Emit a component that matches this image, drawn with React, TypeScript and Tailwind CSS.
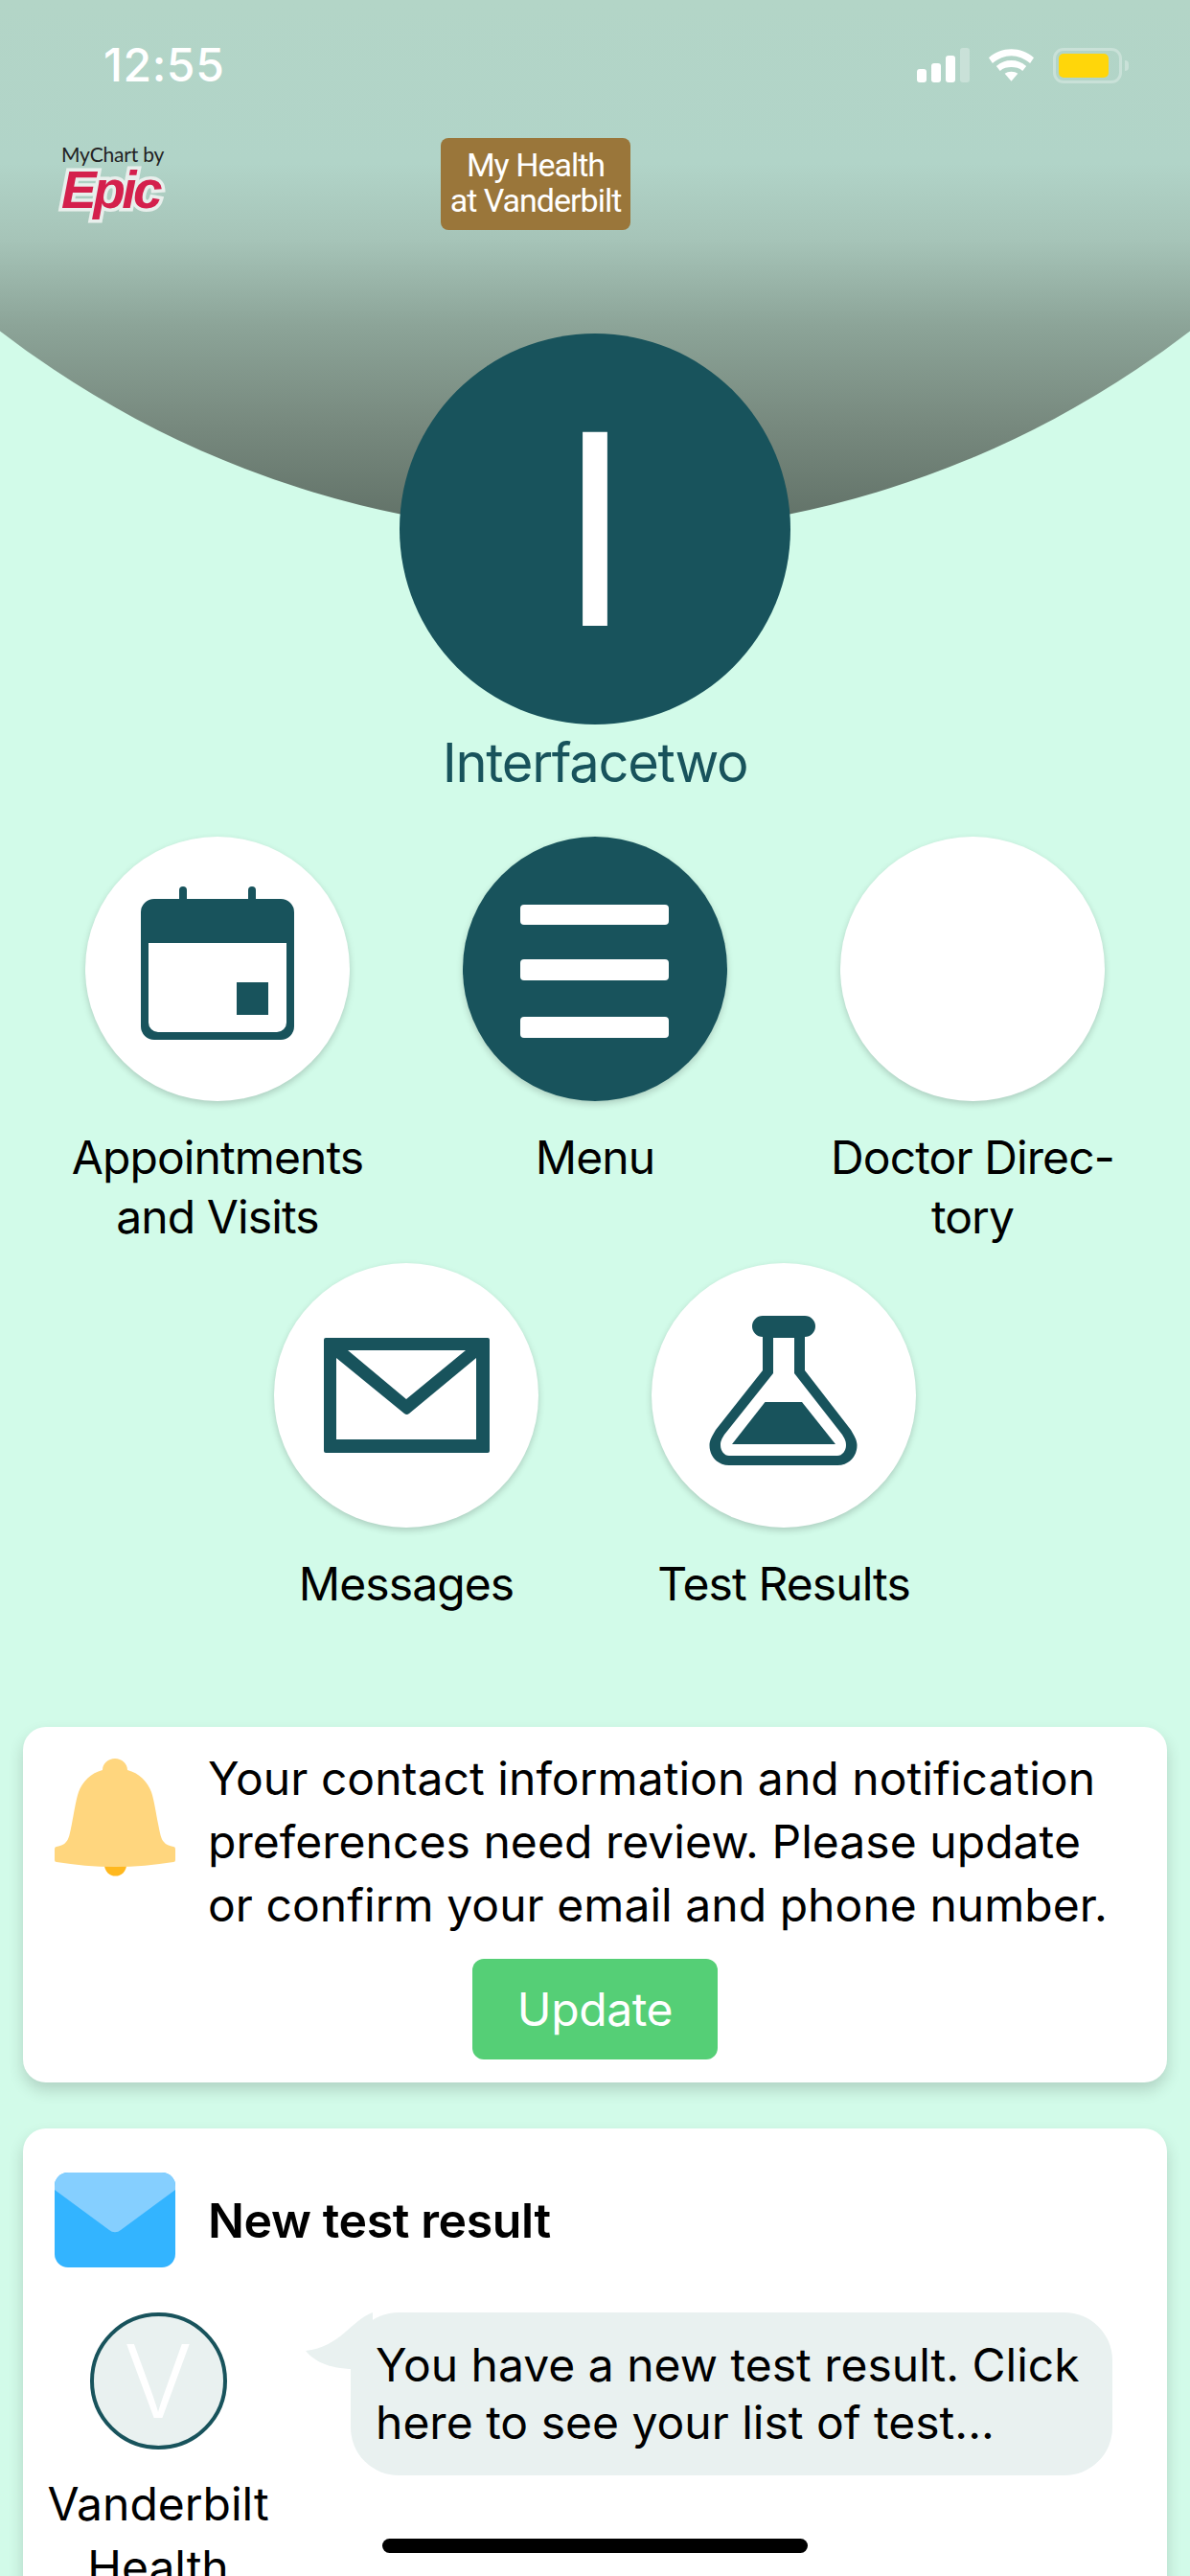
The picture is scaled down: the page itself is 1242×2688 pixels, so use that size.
const teal = "#18535c";

function Tile({ label, dark, children }: { label: React.ReactNode; dark?: boolean; children?: React.ReactNode }) {
  return (
    <div className="flex w-[394px] flex-col items-center">
      <div className={`h-[276px] w-[276px] rounded-full shadow-[0_3px_7px_rgba(0,0,0,0.18)] ${dark ? "bg-[#18535c]" : "bg-white"}`}>
        {children}
      </div>
      <div className="mt-[28px] text-center text-[48px] leading-[62px] tracking-[-0.9px] text-black">{label}</div>
    </div>
  );
}

function Calendar() {
  return (
    <svg viewBox="0 0 276 276" className="h-full w-full" fill={teal}>
      <rect x="98" y="52" width="8" height="20" rx="4" />
      <rect x="170" y="52" width="8" height="20" rx="4" />
      <path fillRule="evenodd" d="M72 65h132a14 14 0 0 1 14 14v119a14 14 0 0 1-14 14H72a14 14 0 0 1-14-14V79a14 14 0 0 1 14-14ZM66 111v83a10 10 0 0 0 10 10h124a10 10 0 0 0 10-10v-83Z" />
      <rect x="158" y="152" width="33" height="34" />
    </svg>
  );
}

function MenuBars() {
  return (
    <svg viewBox="0 0 276 276" className="h-full w-full" fill="#fff">
      <rect x="60" y="71" width="155" height="21" rx="4" />
      <rect x="60" y="128" width="155" height="22" rx="4" />
      <rect x="60" y="188" width="155" height="22" rx="4" />
    </svg>
  );
}

function Envelope() {
  return (
    <svg viewBox="0 0 276 276" className="h-full w-full" fill={teal}>
      <path
        fillRule="evenodd"
        d="M54 78h169a2 2 0 0 1 2 2v116a2 2 0 0 1-2 2H54a2 2 0 0 1-2-2V80a2 2 0 0 1 2-2ZM77 91l61 51 62-51ZM65 99v85h146V99l-70 58a4 4 0 0 1-5 0Z"
      />
    </svg>
  );
}

function Flask() {
  return (
    <svg viewBox="0 0 276 276" className="h-full w-full" fill={teal}>
      <path
        fillRule="evenodd"
        d="M116 55h44a11 11 0 0 1 0 22v35l48 62c4 7 6.500 11 6.500 16 0 12-8.500 21-20.500 21H81c-12 0-20.500-9-20.500-21 0-5 2.500-9 6.500-16l49-62V77a11 11 0 0 1 0-22ZM127 78v37l-51 64c-3 5-4 7-4 11 0 6 4 11 9 11h113c5 0 9-5 9-11 0-4-1-6-4-11l-50-64V78Z"
      />
      <path d="M118.500 145H157l35 44H84Z" />
    </svg>
  );
}

function Bell() {
  return (
    <svg viewBox="0 0 126 123" className="h-[123px] w-[126px] shrink-0">
      <path d="M52 108h23v3a11.500 11.500 0 0 1-23 0Z" fill="#ffb81f" />
      <path
        d="M63 0C70 0 76 5 76 12C88 15 97 24 101 35C104 44 106 58 108 68C110 78 111 84 114 87C116 90 120 91 124 92Q126 92 126 95V106Q126 108 124 108C105 111 84 113 63 113C42 113 21 111 2 108Q0 108 0 106V95Q0 92 2 92C6 91 10 90 12 87C15 84 16 78 18 68C20 58 22 44 25 35C29 24 38 15 50 12C50 5 56 0 63 0Z"
        fill="#ffd67e"
      />
    </svg>
  );
}

function MailBlue() {
  return (
    <svg viewBox="0 0 126 99" className="h-[99px] w-[126px] shrink-0">
      <rect width="126" height="99" rx="14" fill="#33b4ff" />
      <path d="M14 0h98a14 14 0 0 1 14 14v4L69 60a9 9 0 0 1-12 0L0 18v-4A14 14 0 0 1 14 0Z" fill="#85cfff" />
    </svg>
  );
}

export default function App() {
  return (
    <div className="relative h-[2688px] w-[1242px] overflow-hidden bg-[#d2fbe9] font-['Inter',sans-serif] text-black">
      <header className="h-[560px] bg-[linear-gradient(#b3d5c7_0px,#b1d4c8_170px,#a6c4b8_250px,#8ca498_340px,#788a7f_440px,#5f6f65_557px)] [clip-path:ellipse(1017px_1017px_at_621px_-460px)]">
        <div className="flex h-[136px] items-center justify-between pl-[108px] pr-[64px]">
          <span className="text-[48px] font-medium tracking-[0.6px] text-white">12:55</span>
          <div className="flex items-center">
            <svg viewBox="0 0 55 36" className="h-[36px] w-[55px]" fill="#fff">
              <rect x="0" y="22" width="10" height="14" rx="3" />
              <rect x="15" y="16" width="10" height="20" rx="3" />
              <rect x="30" y="8" width="10" height="28" rx="3" />
              <rect x="45" y="0" width="10" height="36" rx="3" fillOpacity="0.3" />
            </svg>
            <svg viewBox="0 0 48 34" className="ml-[20px] h-[34px] w-[47px]" fill="#fff">
              <path d="M24 0c9 0 17 3 24 9l-4 6C38 10 31 7 24 7S10 10 4 15L0 9C7 3 15 0 24 0Z" />
              <path d="M24 12c6 0 11 2 16 6l-4 5c-3-3-8-4-12-4s-9 1-12 4l-4-5c5-4 10-6 16-6Z" />
              <path d="M24 24c3 0 5 1 7 2l-7 8-7-8c2-1 4-2 7-2Z" />
            </svg>
            <div className="ml-[20px] h-[37px] w-[72px] rounded-[11px] border-[3px] border-white/30 p-[3px]">
              <div className="h-full w-[52px] rounded-[5px] bg-[#ffd60a]" />
            </div>
            <div className="ml-[3px] h-[11px] w-[4px] rounded-r-full bg-white/30" />
          </div>
        </div>
        <div className="flex items-start pl-[64px] pt-[8px]">
          <div className="flex w-[396px] flex-col pt-[6px]">
            <span className="font-['Lato',sans-serif] text-[21px] leading-[22px] tracking-[-0.2px] text-[#222]">MyChart by</span>
            <span className="mt-[2px] font-['Liberation_Sans',sans-serif] text-[55px] font-bold italic leading-[48px] tracking-[-3.5px] text-[#d4204c] [-webkit-text-stroke:7px_#e8efec] [paint-order:stroke_fill]">Epic</span>
          </div>
          <div className="flex h-[96px] w-[198px] items-center justify-center rounded-[8px] bg-[#9a763a] pb-[2px] text-center font-['Roboto',sans-serif] text-[34px] leading-[37px] tracking-[-1px] text-white">
            My Health
            <br />
            at Vanderbilt
          </div>
        </div>
      </header>

      <div className="relative mt-[-212px] flex flex-col items-center">
        <div className="flex h-[408px] w-[408px] items-center justify-center rounded-full bg-[#18535c] text-[278px] leading-none text-white">I</div>
        <div className="mt-[7px] text-[56px] leading-[66px] tracking-[-1.3px] text-[#18535c]">Interfacetwo</div>
      </div>

      <div className="mt-[44px] flex justify-center">
        <Tile label={<>Appointments<br />and Visits</>}><Calendar /></Tile>
        <Tile label="Menu" dark><MenuBars /></Tile>
        <Tile label={<>Doctor Direc-<br />tory</>} />
      </div>
      <div className="mt-[17px] flex justify-center">
        <Tile label="Messages"><Envelope /></Tile>
        <Tile label="Test Results"><Flask /></Tile>
      </div>

      <section className="mx-[24px] mt-[118px] h-[371px] rounded-[24px] bg-white px-[33px] pt-[21px] shadow-[0_8px_16px_rgba(0,0,0,0.16)]">
        <div className="flex items-start gap-[34px]">
          <div className="pt-[12px]"><Bell /></div>
          <p className="whitespace-nowrap text-[48px] leading-[66px] tracking-[0.05px]">
            Your contact information and notification
            <br />
            preferences need review. Please update
            <br />
            or confirm your email and phone number.
          </p>
        </div>
        <div className="mt-[23px] flex justify-center">
          <div className="flex h-[105px] w-[256px] items-center justify-center rounded-[12px] bg-[#55cf76] text-[48px] tracking-[-0.4px] text-white">Update</div>
        </div>
      </section>

      <section className="mx-[24px] mt-[48px] h-[520px] rounded-[24px] bg-white px-[33px] pt-[46px] shadow-[0_8px_16px_rgba(0,0,0,0.16)]">
        <div className="flex items-center gap-[34px]">
          <MailBlue />
          <h2 className="text-[50px] font-semibold leading-[60px] tracking-[-0.4px]">New test result</h2>
        </div>
        <div className="mt-[47px] flex items-start">
          <div className="flex w-[216px] shrink-0 flex-col items-center">
            <div className="flex h-[143px] w-[143px] items-center justify-center rounded-full border-[4px] border-[#18535c] bg-[#e9f1f0] text-[106px] font-light leading-none text-white">V</div>
            <div className="mt-[24px] text-center text-[48px] leading-[66px]">Vanderbilt<br />Health</div>
          </div>
          <div className="relative ml-[93px] h-[170px] w-[795px] rounded-[50px] bg-[#e9f1f0] px-[26px] py-[25px] text-[48px] leading-[60px]">
            <svg viewBox="0 0 70 60" className="absolute left-[-47px] top-0 h-[60px] w-[70px]" fill="#e9f1f0">
              <path d="M70 0C48 8 36 36 0 40C8 50 24 59 50 59H70Z" />
            </svg>
            You have a new test result. Click
            <br />
            here to see your list of test...
          </div>
        </div>
      </section>

      <div className="absolute bottom-[24px] left-[399px] h-[15px] w-[444px] rounded-full bg-black" />
    </div>
  );
}
